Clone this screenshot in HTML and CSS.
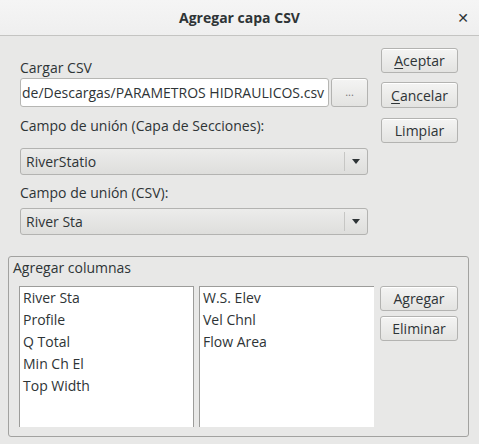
FILE: index.html
```html
<!DOCTYPE html>
<html lang="es">
<head>
<meta charset="utf-8">
<title>Agregar capa CSV</title>
<link rel="stylesheet" href="styles.css">
</head>
<body>
<div class="dialog">
  <div class="titlebar">
    <span class="title">Agregar capa CSV</span>
    <span class="close">✕</span>
  </div>
  <div class="content">
    <div class="top">
      <div class="form">
        <div class="label l1">Cargar CSV</div>
        <div class="filerow">
          <div class="input">de/Descargas/PARAMETROS HIDRAULICOS.csv</div>
          <div class="btn browse">...</div>
        </div>
        <div class="label l2">Campo de unión (Capa de Secciones):</div>
        <div class="combo c1"><span class="ctext">RiverStatio</span><span class="sep"></span><span class="arrow"></span></div>
        <div class="label l3">Campo de unión (CSV):</div>
        <div class="combo c2"><span class="ctext">River Sta</span><span class="sep"></span><span class="arrow"></span></div>
      </div>
      <div class="actions">
        <div class="btn act"><u>A</u>ceptar</div>
        <div class="btn act b2"><u>C</u>ancelar</div>
        <div class="btn act b3">Limpiar</div>
      </div>
    </div>
    <div class="group">
      <div class="gtitle">Agregar columnas</div>
      <div class="grow">
        <div class="list la">
          <div class="item">River Sta</div>
          <div class="item">Profile</div>
          <div class="item">Q Total</div>
          <div class="item">Min Ch El</div>
          <div class="item">Top Width</div>
        </div>
        <div class="list lb">
          <div class="item">W.S. Elev</div>
          <div class="item">Vel Chnl</div>
          <div class="item">Flow Area</div>
        </div>
        <div class="gbtns">
          <div class="btn gb">Agregar</div>
          <div class="btn gb g2">Eliminar</div>
        </div>
      </div>
    </div>
  </div>
</div>
</body>
</html>
```
FILE: styles.css
```css
* { box-sizing: border-box; }
html, body { margin: 0; padding: 0; }
body {
  width: 479px;
  height: 444px;
  overflow: hidden;
  background: #e8e8e7;
  font-family: "Open Sans", "DejaVu Sans", sans-serif;
  font-size: 14px;
  color: #2e3436;
}
.dialog { width: 479px; height: 444px; display: flex; flex-direction: column; }
.titlebar {
  height: 36px;
  flex: none;
  background: linear-gradient(#f5f5f5, #efefef);
  border-bottom: 1px solid #c4c4c2;
  display: flex;
  align-items: center;
  justify-content: center;
  position: relative;
}
.title { font-weight: bold; font-size: 14px; color: #2e3436; }
.close {
  position: absolute;
  right: 10px;
  top: 8px;
  font-size: 14px;
  font-weight: bold;
  color: #2e3436;
}
.content { flex: 1; padding: 0 0 0 8px; }
.top { display: flex; padding-left: 12px; }
.form { width: 348px; display: flex; flex-direction: column; }
.label { height: 18px; line-height: 18px; }
.l1 { margin-top: 23px; }
.l2 { margin-top: 10px; }
.l3 { margin-top: 9px; }
.filerow { display: flex; margin-top: 1px; height: 29px; }
.input {
  width: 309px;
  height: 29px;
  background: #fff;
  border: 1px solid #b6b6b3;
  border-radius: 3px;
  padding: 0 0 0 1px;
  line-height: 27px;
  white-space: nowrap;
  overflow: hidden;
}
.btn {
  border: 1px solid #b3b3b1;
  border-radius: 3px;
  background: linear-gradient(#f4f4f3, #e3e3e1);
  display: flex;
  align-items: center;
  justify-content: center;
  box-shadow: inset 0 1px #fff;
}
.browse { width: 37px; margin-left: 2px; height: 29px; font-size: 11px; color: #777; padding-bottom: 2px; }
.combo {
  height: 27px;
  border: 1px solid #b3b3b1;
  border-radius: 3px;
  background: linear-gradient(#ececeb, #dededc);
  display: flex;
  align-items: center;
  padding-left: 5px;
}
.c1 { margin-top: 13px; }
.c2 { margin-top: 6px; }
.ctext { flex: 1; }
.sep { width: 1px; height: 19px; background: #c6c6c4; }
.arrow {
  width: 0; height: 0;
  border-left: 4.5px solid transparent;
  border-right: 4.5px solid transparent;
  border-top: 5px solid #2e3436;
  margin: 0 7px 0 7px;
}
.actions { margin-left: 13px; display: flex; flex-direction: column; padding-top: 12px; }
.act { width: 77px; height: 25px; }
.act u { text-decoration-thickness: 1px; text-underline-offset: 2px; }
.b2 { margin-top: 9px; height: 26px; }
.b3 { margin-top: 10px; }
.group {
  margin-top: 21px;
  width: 461px;
  height: 181px;
  border: 1px solid #a2a2a0;
  border-radius: 3px;
  padding: 0 0 0 10px;
}
.gtitle { height: 20px; line-height: 22px; margin-left: -6px; padding-top: 0; }
.grow { display: flex; margin-top: 9px; }
.list {
  height: 141px;
  background: #fff;
  border: 1px solid #9c9c9a;
  border-bottom: none;
  padding: 0 0 0 3px;
}
.la { width: 175px; }
.lb { width: 175px; margin-left: 5px; border-right: none; }
.item { height: 22px; line-height: 22px; }
.gbtns { margin-left: 6px; display: flex; flex-direction: column; }
.gb { width: 78px; height: 25px; }
.g2 { margin-top: 5px; }
```
